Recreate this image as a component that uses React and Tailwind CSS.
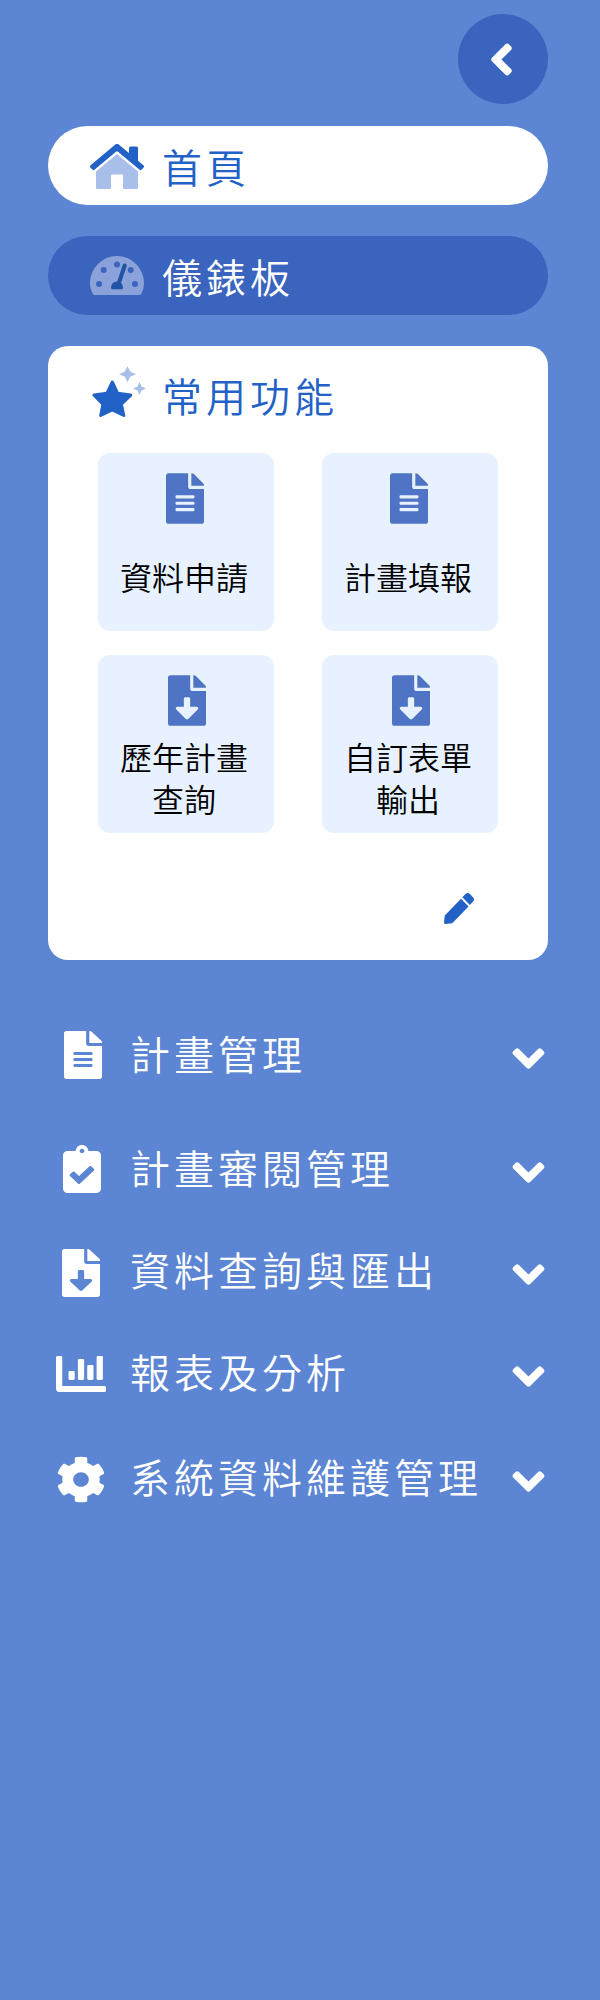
import React from "react";
import {
  FaAngleDown,
  FaAngleLeft,
  FaChartBar,
  FaClipboardCheck,
  FaCog,
  FaFileAlt,
  FaFileDownload,
  FaPen,
} from "react-icons/fa";

function HomeIcon() {
  return (
    <svg viewBox="0 0 54 45" className="mt-px h-[45px] w-[54px]">
      <path fill="#a7bfe9" d="M6 27.500 27 10l21 17.500V44a1 1 0 0 1-1 1H34a1 1 0 0 1-1-1V31.500a1 1 0 0 0-1-1H22a1 1 0 0 0-1 1V44a1 1 0 0 1-1 1H7a1 1 0 0 1-1-1z" />
      <path fill="#2262c6" d="M25 .7a3.200 3.200 0 0 1 4 0L39 9V4a1.500 1.500 0 0 1 1.500-1.500h6A1.500 1.500 0 0 1 48 4v12.800l5.400 4.500a1.500 1.500 0 0 1 .2 2.100l-1.900 2.200a1.500 1.500 0 0 1-2.100.2L28 7.700a1.500 1.500 0 0 0-2 0L4.400 25.800a1.500 1.500 0 0 1-2.100-.2L.4 23.400a1.500 1.500 0 0 1 .2-2.100z" />
    </svg>
  );
}

function GaugeIcon() {
  return (
    <svg viewBox="0 0 54 39" className="h-[39px] w-[54px]">
      <path fill="#8ba1d9" d="M27 0a27 27 0 0 1 27 27c0 4-1 7.500-2.700 10.500-.6 1-1.300 1.500-2.300 1.500H5c-1 0-1.700-.5-2.300-1.500C1 34.500 0 31 0 27A27 27 0 0 1 27 0z" />
      <g fill="#3a64bd">
        <circle cx="9" cy="28" r="3" />
        <circle cx="13.700" cy="14" r="3" />
        <circle cx="27" cy="8.500" r="3" />
        <circle cx="40.700" cy="14" r="3" />
        <circle cx="45" cy="28" r="3" />
      </g>
      <path d="M34.700 9.500 28.500 28" stroke="#8ba1d9" strokeWidth="6.500" strokeLinecap="round" />
      <path d="M34.700 9.500 28.500 28" stroke="#2054a4" strokeWidth="4" strokeLinecap="round" />
      <path fill="#2054a4" d="M27 25.500a6 6 0 0 1 6 6c0 1-.6 1.800-1.500 1.800h-9c-.9 0-1.500-.8-1.500-1.800a6 6 0 0 1 6-6z" />
    </svg>
  );
}

function StarIcon() {
  return (
    <svg viewBox="0 0 54 51" className="h-[51px] w-[54px]">
      <path fill="#2262c6" stroke="#2262c6" strokeWidth="3" strokeLinejoin="round" d="m20.300 16 5.300 11.200 13.200 1.900-9.400 9.200 2.400 11.200-11.500-5.700-11.600 5.700 2.200-11.200L2 29.100l13-1.900z" />
      <path fill="#a7bfe9" d="m35.500 0 2.600 5.600 5.900 2.600-5.900 2.500-2.600 5.600-2.600-5.600-5.900-2.500 5.900-2.600zM47.500 16l2 4.600 4.500 2-4.500 2-2 4.400-2-4.400-4.500-2 4.500-2z" />
    </svg>
  );
}

const tiles = [
  { Icon: FaFileAlt, iconClass: "-ml-0.5", textClass: "mt-[31px]", lines: ["資料申請"] },
  { Icon: FaFileAlt, iconClass: "-ml-0.5", textClass: "mt-[31px]", lines: ["計畫填報"] },
  { Icon: FaFileDownload, iconClass: "ml-0.5", textClass: "mt-[9px]", lines: ["歷年計畫", "查詢"] },
  { Icon: FaFileDownload, iconClass: "ml-0.5", textClass: "mt-[9px]", lines: ["自訂表單", "輸出"] },
];

const menu = [
  { Icon: FaFileAlt, label: "計畫管理", row: "h-[114px]", icon: "ml-4 h-12 w-[38px]" },
  { Icon: FaClipboardCheck, label: "計畫審閱管理", row: "h-[114px]", icon: "ml-[15px] h-12 w-[38px]" },
  { Icon: FaFileDownload, label: "資料查詢與匯出", row: "h-[90px]", icon: "mt-[3px] ml-[14px] h-12 w-[38px]" },
  { Icon: FaChartBar, label: "報表及分析", row: "h-[114px]", icon: "mt-0.5 ml-2 h-12 w-[50px]" },
  { Icon: FaCog, label: "系統資料維護管理", row: "h-[96px]", icon: "mt-[3px] ml-2 h-[47px] w-[50px]" },
];

export default function App() {
  return (
    <nav className="flex h-[2000px] w-[600px] flex-col bg-[#5c85d3] pt-3.5 pr-[52px] pl-12 font-['Noto_Sans_CJK_TC',sans-serif] text-[40px] font-[350] tracking-[4px] text-white">
      <button className="flex size-[90px] items-center justify-center self-end rounded-full bg-[#3a64bd]">
        <FaAngleLeft className="mr-1 size-[51px]" />
      </button>
      <a className="mt-[22px] flex h-[79px] items-center rounded-full bg-white pl-[42px] text-[#2262c6]">
        <HomeIcon />
        <span className="mt-px ml-[18px] leading-[60px]">首頁</span>
      </a>
      <a className="mt-[31px] flex h-[79px] items-center rounded-full bg-[#3a64bd] pl-[42px]">
        <GaugeIcon />
        <span className="mt-px ml-[18px] leading-[60px]">儀錶板</span>
      </a>
      <section className="mt-[31px] flex h-[614px] shrink-0 flex-col rounded-[20px] bg-white">
        <h2 className="flex h-[107px] items-start pt-5 pl-11 text-[#2262c6]">
          <StarIcon />
          <span className="-mt-px ml-4 leading-[60px] font-[350]">常用功能</span>
        </h2>
        <div className="grid grid-cols-[176px_176px] gap-x-12 gap-y-6 pl-[50px]">
          {tiles.map(({ Icon, iconClass, textClass, lines }) => (
            <div key={lines[0]} className="flex h-[178px] flex-col items-center rounded-xl bg-[#e7f1ff] pt-5 text-black">
              <Icon className={`h-[51px] w-[38px] shrink-0 text-[#4f74c5] ${iconClass}`} />
              <p className={`mr-1 text-center text-[32px] leading-[42px] tracking-normal ${textClass}`}>
                {lines.map((line) => (
                  <span key={line} className="block">{line}</span>
                ))}
              </p>
            </div>
          ))}
        </div>
        <FaPen preserveAspectRatio="none" className="mt-[60px] mr-[74px] h-[31px] w-[30px] self-end text-[#2262c6]" />
      </section>
      <ul className="mt-[38px]">
        {menu.map(({ Icon, label, row, icon }) => (
          <li key={label} className={`flex items-center ${row}`}>
            <span className="flex w-[82px] shrink-0">
              <Icon preserveAspectRatio="none" className={icon} />
            </span>
            <span className="-mt-1 flex-1 leading-[60px] whitespace-nowrap">{label}</span>
            <FaAngleDown className="mt-[7px] -mr-1.5 size-[51px] shrink-0" />
          </li>
        ))}
      </ul>
    </nav>
  );
}
